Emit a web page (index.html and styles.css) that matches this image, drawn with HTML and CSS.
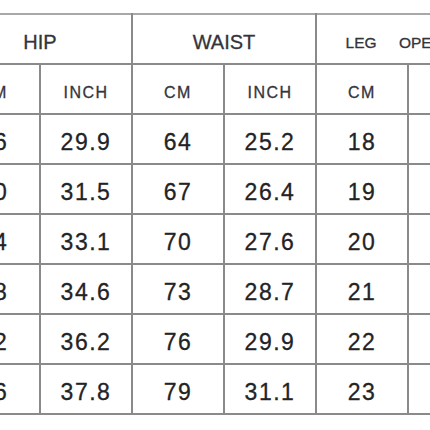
FILE: index.html
```html
<!DOCTYPE html>
<html>
<head>
<meta charset="utf-8">
<link rel="stylesheet" href="styles.css">
</head>
<body>
<div class="sheet">
<table class="chart">
  <colgroup><col><col><col><col><col><col></colgroup>
  <thead>
    <tr class="group">
      <th colspan="2">HIP</th>
      <th colspan="2">WAIST</th>
      <th colspan="2" class="small">LEG OPENING</th>
    </tr>
    <tr class="unit">
      <th>CM</th><th>INCH</th><th>CM</th><th>INCH</th><th>CM</th><th>INCH</th>
    </tr>
  </thead>
  <tbody>
    <tr><td>76</td><td>29.9</td><td>64</td><td>25.2</td><td>18</td><td>7.1</td></tr>
    <tr><td>80</td><td>31.5</td><td>67</td><td>26.4</td><td>19</td><td>7.5</td></tr>
    <tr><td>84</td><td>33.1</td><td>70</td><td>27.6</td><td>20</td><td>7.9</td></tr>
    <tr><td>88</td><td>34.6</td><td>73</td><td>28.7</td><td>21</td><td>8.3</td></tr>
    <tr><td>92</td><td>36.2</td><td>76</td><td>29.9</td><td>22</td><td>8.7</td></tr>
    <tr><td>96</td><td>37.8</td><td>79</td><td>31.1</td><td>23</td><td>9.1</td></tr>
  </tbody>
</table>
</div>
</body>
</html>
```
FILE: styles.css
```css
html, body {
  margin: 0;
  padding: 0;
  background: #ffffff;
}
.sheet {
  width: 430px;
  height: 430px;
  overflow: hidden;
  padding-top: 13px;
  box-sizing: border-box;
}
.chart {
  margin-left: -53px;
  border-collapse: collapse;
  table-layout: fixed;
  width: 552px;
  font-family: "Liberation Sans", Arial, sans-serif;
  color: #2b2b2e;
}
.chart col {
  width: 92px;
}
.chart th,
.chart td {
  border: 2px solid #8a8a8a;
  height: 50px;
  padding: 7px 0 0 0;
  box-sizing: border-box;
  text-align: center;
  vertical-align: middle;
  font-weight: normal;
  -webkit-text-stroke: 0.3px currentColor;
}
.group th {
  font-size: 20px;
  color: #34343a;
  border-top-color: #a8a8a8;
}
.group th.small {
  font-size: 15.5px;
  word-spacing: 18px;
}
.unit th {
  font-size: 16px;
  letter-spacing: 1.5px;
  color: #34343a;
}
.chart td {
  font-size: 23px;
  letter-spacing: 1.5px;
  color: #232326;
}
```
